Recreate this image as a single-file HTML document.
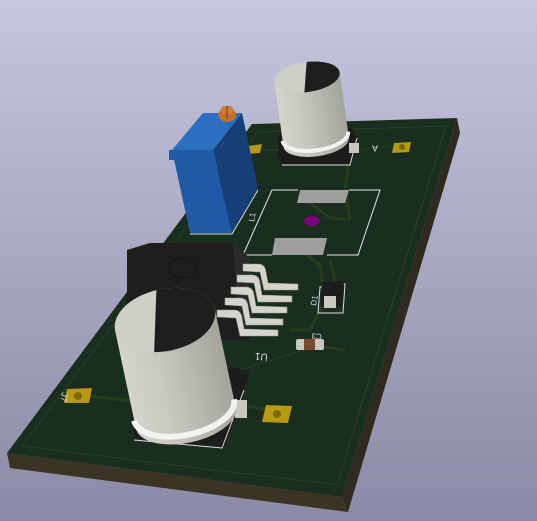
<!DOCTYPE html>
<html><head><meta charset="utf-8"><style>
html,body{margin:0;padding:0;width:537px;height:521px;overflow:hidden}
svg{display:block}
</style></head><body>
<svg width="537" height="521" viewBox="0 0 537 521" xmlns="http://www.w3.org/2000/svg" font-family="Liberation Sans, sans-serif">
<defs>
<linearGradient id="bg" x1="0" y1="0" x2="0" y2="1">
<stop offset="0" stop-color="#c6c6de"/><stop offset="1" stop-color="#8a8aa6"/></linearGradient>
<linearGradient id="cyl" x1="0" y1="0" x2="1" y2="0">
<stop offset="0" stop-color="#d4d4cc"/><stop offset="0.35" stop-color="#c8c8c0"/><stop offset="1" stop-color="#a4a49c"/></linearGradient>
<clipPath id="half1"><polygon points="5,-60 80,-60 80,60 -25,60"/></clipPath>
<clipPath id="half2"><polygon points="5,-30 60,-30 60,30 -8,30"/></clipPath>
</defs>
<rect width="537" height="521" fill="url(#bg)"/>
<polygon points="7,453 342,497 348,512 10,468" fill="#3b3324"/>
<polygon points="457,118 460,133 348,512 342,497" fill="#2e2a1e"/>
<polygon points="252,124 457,118 342,497 7,453" fill="#1a2e1f"/>
<polygon points="258,132 446,126 337,485 22,446" fill="none" stroke="#2f3f22" stroke-width="1"/>
<path d="M80,395 L140,402 M283,412 L245,406 M300,195 L330,218 L350,220 M300,250 L320,265 L325,300 L310,330 L290,330 M310,345 L345,350 M350,152 L345,190 L350,220 M330,260 L340,300" stroke="#2a3c1e" stroke-width="3" fill="none"/>
<path d="M240,370 L320,345 M360,150 L400,145 M255,150 L280,150" stroke="#2c3e24" stroke-width="1" fill="none"/>
<polygon points="248,146 262,144 260,153 246,154" fill="#b89a10"/>
<polygon points="394,143 411,142 409,152 392,153" fill="#b89a10"/>
<circle cx="402" cy="147" r="3" fill="#7a6a0a"/>
<polygon points="67,389 92,388 89,403 64,403" fill="#b89a10"/>
<circle cx="78" cy="396" r="4" fill="#7a6a0a"/>
<polygon points="266,405 292,406 288,423 262,422" fill="#b89a10"/>
<circle cx="277" cy="414" r="4" fill="#7a6a0a"/>
<text x="0" y="0" font-size="9" fill="#ddd" transform="translate(378,145) rotate(180)">A</text>
<text x="0" y="0" font-size="9" fill="#ddd" transform="translate(62,392) rotate(100)">J7</text>
<text x="0" y="0" font-size="10" fill="#ddd" transform="translate(268,354) rotate(185)">U1</text>
<text x="0" y="0" font-size="8" fill="#ddd" transform="translate(322,334) rotate(185)">C3</text>
<text x="0" y="0" font-size="8" fill="#ddd" transform="translate(316,306) rotate(-80)">D1</text>
<text x="0" y="0" font-size="8" fill="#ddd" transform="translate(254,222) rotate(-80)">L1</text>
<path d="M243,255 L272,190 L298,190 M349,190 L380,190 L358,255 L327,255 M272,255 L243,255" stroke="#e8e8e8" stroke-width="1" fill="none"/>
<polygon points="300,190 349,190 345,203 297,203" fill="#9e9e9e"/>
<polygon points="275,238 327,238 323,255 272,255" fill="#9e9e9e"/>
<ellipse cx="312" cy="221" rx="8" ry="5" fill="#7a007a"/>
<polygon points="320,287 345,284 343,313 318,313" fill="none" stroke="#ddd" stroke-width="1"/>
<polygon points="322,282 344,281 342,306 321,306" fill="#1c1c1c"/>
<rect x="324" y="296" width="12" height="12" fill="#c8c8c0"/>
<rect x="296" y="339" width="28" height="11" rx="2" fill="#c8c8c0"/>
<rect x="304" y="339" width="11" height="11" fill="#7a4a30"/>
<polygon points="127,250 150,243 233,243 250,258 250,340 127,340" fill="#1e1e1e"/>
<polygon points="233,243 250,258 250,330 240,330" fill="#2a2a2a"/>
<ellipse cx="183" cy="268" rx="14" ry="10" fill="none" stroke="#151515" stroke-width="1"/>
<g fill="#d4d4cc" stroke="#9a9a94" stroke-width="0.6">
<path d="M243,264 L258,264 Q265,264 266,272 L268,283 L298,284 L298,290 L264,290 L260,272 L243,271 Z"/>
<path d="M237,275 L252,275 Q259,275 260,283 L262,295 L292,296 L292,302 L258,302 L254,283 L237,282 Z"/>
<path d="M231,287 L246,287 Q253,287 254,295 L256,306 L287,307 L287,313 L252,313 L248,295 L231,294 Z"/>
<path d="M225,298 L240,298 Q247,298 248,306 L250,318 L283,319 L283,325 L246,325 L242,306 L225,305 Z"/>
<path d="M217,310 L234,310 Q241,310 242,318 L244,329 L278,330 L278,336 L240,336 L236,318 L217,317 Z"/>
</g>
<polygon points="172,150 203,113 242,113 213,150" fill="#2a6fc0"/>
<polygon points="172,150 213,150 232,233 190,233" fill="#1f5aa6"/>
<polygon points="213,150 242,113 258,188 232,233" fill="#163f78"/>
<rect x="169" y="150" width="8" height="10" fill="#1f5aa6"/>
<ellipse cx="227" cy="115" rx="9" ry="7" fill="#c27030"/>
<rect x="221" y="106" width="12" height="8" rx="3" fill="#d08038"/>
<line x1="227" y1="106" x2="227" y2="118" stroke="#8a4a20" stroke-width="1.5"/>
<path d="M190,234 L232,234 L258,190" stroke="#ddd" fill="none" stroke-width="1"/>
<!-- top capacitor -->
<polygon points="278,135 352,128 357,138 352,165 282,165 278,155" fill="#1c1c1c"/>
<path d="M282,165 L350,165 L357,138" stroke="#ddd" fill="none" stroke-width="1"/>
<rect x="349" y="143" width="10" height="10" fill="#c8c8c0"/>
<g transform="translate(307,77) rotate(-8)">
<rect x="-33" y="0" width="66" height="66" fill="url(#cyl)"/>
<ellipse cx="0" cy="66" rx="33" ry="14" fill="url(#cyl)"/>
<path d="M-33,60 A33,14 0 0 0 33,60" stroke="#f2f2ee" stroke-width="4" fill="none"/>
<ellipse cx="0" cy="0" rx="33" ry="15" fill="#cfcfc8"/>
<ellipse cx="0" cy="0" rx="33" ry="15" fill="#1e1e1e" clip-path="url(#half2)"/>
</g>
<!-- big capacitor -->
<polygon points="130,405 232,367 250,372 225,447 135,438" fill="#1c1c1c"/>
<path d="M134,440 L222,448 L244,390" stroke="#ddd" fill="none" stroke-width="1"/>
<rect x="235" y="400" width="12" height="18" fill="#c8c8c0"/>
<g transform="translate(165,320) rotate(-12)">
<rect x="-51" y="0" width="102" height="100" fill="url(#cyl)"/>
<ellipse cx="0" cy="100" rx="51" ry="25" fill="url(#cyl)"/>
<path d="M-51,92 A51,25 0 0 0 51,92" stroke="#f2f2ee" stroke-width="6" fill="none"/>
<ellipse cx="0" cy="0" rx="51" ry="31" fill="#cfcfc8"/>
<ellipse cx="0" cy="0" rx="51" ry="31" fill="#1e1e1e" clip-path="url(#half1)"/>
</g>
</svg>
</body></html>
